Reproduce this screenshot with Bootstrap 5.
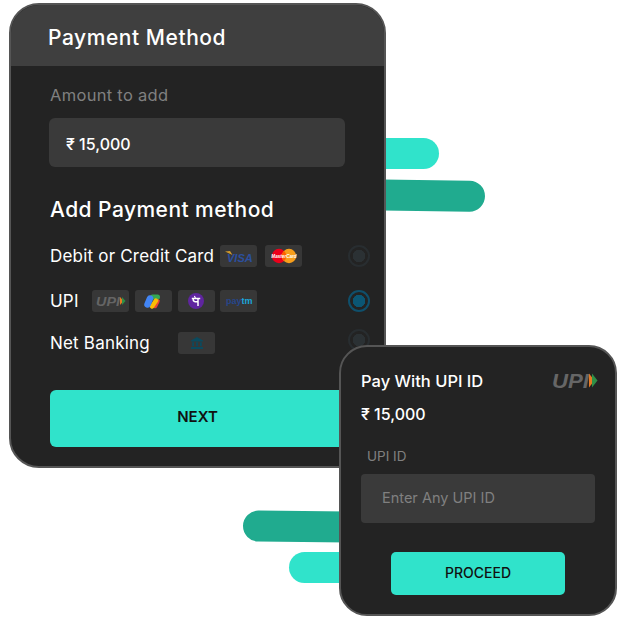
<!DOCTYPE html>
<html lang="en">
<head>
  <meta charset="UTF-8" />
  <meta name="viewport" content="width=device-width, initial-scale=1.0" />
  <title>Payment Method</title>
  <link href="https://cdn.jsdelivr.net/npm/bootstrap@5.3.3/dist/css/bootstrap.min.css" rel="stylesheet" />
  <style>
    :root {
      --panel: #232323;
      --panel-head: #3f3f3f;
      --panel-line: #555;
      --field: #3a3a3a;
      --muted: #808080;
      --teal: #30e3cb;
      --green: #20ab8f;
    }
    body {
      background: #fff;
      font-family: Inter, "Open Sans", sans-serif;
      color: #fff;
      overflow: hidden;
    }
    /* free canvas: cards and streaks overlap each other */
    .stage { position: relative; width: 625px; height: 625px; }
    .streak { position: absolute; height: 31px; border-radius: 16px; }
    .streak-a { left: 350px; top: 138px; width: 89px; background: var(--teal); }
    .streak-b { left: 350px; top: 180px; width: 135px; background: var(--green); transform: rotate(.7deg); }
    .streak-c { left: 243px; top: 511px; width: 120px; background: var(--green); transform: rotate(.6deg); }
    .streak-d { left: 289px; top: 552px; width: 80px; background: var(--teal); }

    .pay-panel {
      position: absolute;
      left: 9px; top: 3px; width: 377px;
      background: var(--panel);
      border: 2px solid var(--panel-line);
      border-radius: 30px;
      overflow: hidden;
    }
    .pay-panel .card-header {
      height: 61px;
      padding: 0 0 0 37px;
      background: var(--panel-head);
      border: 0;
      border-radius: 0;
      font-size: 21px;
      font-weight: 500;
      letter-spacing: .55px;
      line-height: 65px;
      color: #fff;
    }
    .pay-panel .card-body { padding: 17px 14px 19px 39px; }
    .field-label { font-size: 16.5px; letter-spacing: .3px; line-height: 24px; color: var(--muted); }
    .amount-box {
      width: 296px;
      height: 49px;
      margin: 11px 0 0 -1px;
      padding: 2px 17px 0;
      background: var(--field);
      border: 0;
      border-radius: 6px;
      color: #fff;
      font-size: 16px;
      font-weight: 500;
    }
    .amount-box:focus { background: var(--field); color: #fff; box-shadow: none; }
    .add-title { margin: 28px 0 -1px; font-size: 21px; letter-spacing: .45px; line-height: 30px; font-weight: 500; }
    .method-row { height: 30px; font-size: 17px; letter-spacing: .2px; }
    .method-row > span:first-child { padding-top: 2px; }
    .method-row.first { margin-top: 17px; }
    .method-row.second { margin-top: 15px; }
    .method-row.third { margin-top: 12px; }
    .lbl-card { width: 170px; white-space: nowrap; }
    .lbl-upi { width: 42px; }
    .lbl-net { width: 128px; white-space: nowrap; }
    .chip-gap { gap: 5.8px; }
    .chip {
      width: 37px; height: 22px;
      background: #373737;
      border-radius: 3px;
      display: flex; align-items: center; justify-content: center;
    }
    .pay-radio.form-check-input {
      width: 22px; height: 22px;
      margin: 0 0 0 auto;
      flex: none;
      background: radial-gradient(circle, #2b3134 0 6px, transparent 6.5px);
      border: 2px solid #282d30;
      box-shadow: none;
    }
    .pay-radio.form-check-input:checked {
      background: radial-gradient(circle, #0b5674 0 6px, transparent 6.5px);
      border-color: #0f4f6b;
    }
    .method-row.third .pay-radio { margin-top: -6px; }
    .next-btn {
      display: block;
      width: 295px; height: 57px;
      margin-top: 32px;
      padding: 0 0 2px;
      background: var(--teal);
      border: 0;
      border-radius: 6px;
      color: #111;
      font-size: 15px;
      font-weight: 600;
    }
    .upi-panel {
      position: absolute;
      left: 339px; top: 345px; width: 278px;
      padding: 22px 20px 19px;
      background: var(--panel);
      border: 2px solid var(--panel-line);
      border-radius: 28px;
      color: #fff;
    }
    .upi-title { font-size: 16.5px; line-height: 24px; font-weight: 500; white-space: nowrap; }
    .upi-logo { margin: 3px -3px 0 0; overflow: visible; flex: none; }
    .upi-amount { margin-top: 9px; font-size: 16px; line-height: 24px; font-weight: 500; }
    .upi-label { margin: 20px 0 8px 6px; font-size: 13.5px; line-height: 20px; color: var(--muted); }
    .upi-field {
      height: 49px;
      padding: 0 21px 2px;
      background: var(--field);
      border: 0;
      border-radius: 4px;
      color: #fff;
      font-size: 14.5px;
    }
    .upi-field::placeholder { color: var(--muted); opacity: 1; }
    .upi-field:focus { background: var(--field); box-shadow: none; }
    .proceed-btn {
      display: block;
      width: 174px; height: 43px;
      margin: 29px auto 0;
      padding: 0 0 3px;
      background: var(--teal);
      border: 0;
      border-radius: 5px;
      color: #111;
      font-size: 14px;
      font-weight: 500;
    }
    .logo-txt { font-family: "Liberation Sans", sans-serif; letter-spacing: 0; }
  </style>
</head>
<body>
  <div class="stage">
    <div class="streak streak-a"></div>
    <div class="streak streak-b"></div>
    <div class="streak streak-c"></div>
    <div class="streak streak-d"></div>

    <div class="card pay-panel">
      <div class="card-header">Payment Method</div>
      <div class="card-body">
        <div class="field-label">Amount to add</div>
        <input class="form-control amount-box" type="text" value="₹ 15,000" aria-label="Amount to add" />
        <h2 class="add-title">Add Payment method</h2>

        <div class="method-row first d-flex align-items-center">
          <span class="lbl-card">Debit or Credit Card</span>
          <div class="d-flex gap-2">
            <span class="chip">
              <svg width="30" height="14" viewBox="0 0 30 14"><path d="M1 2.5l5-.5 2.5 4z" fill="#d19a2c"/><text class="logo-txt" x="3" y="12.5" font-size="11" font-weight="700" font-style="italic" fill="#2c4f9e">VISA</text></svg>
            </span>
            <span class="chip">
              <svg width="26" height="16" viewBox="0 0 26 16"><circle cx="8" cy="8" r="7.2" fill="#eb001b"/><circle cx="18" cy="8" r="7.2" fill="#f79e1b"/><path d="M13 2.7a7.2 7.2 0 0 1 0 10.6 7.2 7.2 0 0 1 0-10.6z" fill="#ff5f00"/><text class="logo-txt" x="13" y="9.8" text-anchor="middle" font-size="4.6" font-weight="700" font-style="italic" fill="#fff">MasterCard</text></svg>
            </span>
          </div>
          <input class="form-check-input pay-radio" type="radio" name="method" aria-label="Card" />
        </div>

        <div class="method-row second d-flex align-items-center">
          <span class="lbl-upi">UPI</span>
          <div class="d-flex chip-gap">
            <span class="chip">
              <svg width="30" height="12" viewBox="0 0 30 12"><text class="logo-txt" x="0" y="10.5" font-size="12" font-weight="700" font-style="italic" fill="#656565" textLength="24" lengthAdjust="spacingAndGlyphs">UPI</text><path d="M24 2l3.5 4-3.5 4z" fill="#e87a24"/><path d="M26 2l3.5 4-3.5 4z" fill="#2f8f46"/></svg>
            </span>
            <span class="chip">
              <svg width="20" height="17" viewBox="0 0 20 17"><g fill="none" stroke-linecap="round"><path d="M14.5 8l-2.5 5" stroke="#ea4335" stroke-width="4.5"/><path d="M9.5 4h5" stroke="#34a853" stroke-width="5"/><path d="M13 7.5l-4 6" stroke="#fbbc04" stroke-width="4.5"/><path d="M7 5.5l-2.5 6" stroke="#4285f4" stroke-width="6.5"/></g></svg>
            </span>
            <span class="chip">
              <svg width="16" height="16" viewBox="0 0 16 16"><circle cx="8" cy="8" r="8" fill="#5f259f"/><g fill="none" stroke="#fff" stroke-width="1.5"><path d="M3.8 5.6h8.4"/><path d="M10 5.6v7.4"/><path d="M5.2 5.6c-.4 2.6 1.6 3.6 4.8 3.1"/><path d="M7.6 5.4L6.4 3" stroke-width="1.1"/></g></svg>
            </span>
            <span class="chip">
              <svg width="28" height="12" viewBox="0 0 28 12"><text class="logo-txt" x="1" y="9" font-size="9" font-weight="700" fill="#26468c">pay<tspan fill="#1ba7dc">tm</tspan></text></svg>
            </span>
          </div>
          <input class="form-check-input pay-radio" type="radio" name="method" checked aria-label="UPI" />
        </div>

        <div class="method-row third d-flex align-items-center">
          <span class="lbl-net">Net Banking</span>
          <span class="chip">
            <svg width="12" height="12" viewBox="0 0 12 12" fill="#0b4a5e"><path d="M6 0l6 3.4v1H0v-1z"/><path d="M1.2 5.2h1.8v4H1.2zM5.1 5.2h1.8v4H5.1zM9 5.2h1.8v4H9z"/><path d="M0 10h12v2H0z"/></svg>
          </span>
          <input class="form-check-input pay-radio" type="radio" name="method" aria-label="Net banking" />
        </div>

        <button class="btn next-btn" type="button">NEXT</button>
      </div>
    </div>

    <div class="upi-panel">
      <div class="d-flex justify-content-between align-items-start">
        <span class="upi-title">Pay With UPI ID</span>
        <svg class="upi-logo" width="46" height="17" viewBox="0 0 46 17"><text class="logo-txt" x="0" y="15.5" font-size="20" font-weight="700" font-style="italic" fill="#666" textLength="37" lengthAdjust="spacingAndGlyphs">UPI</text><path d="M37 1.5l5.5 7-5.5 7z" fill="#e87a24"/><path d="M40 1.5l5.5 7-5.5 7z" fill="#2f8f46"/></svg>
      </div>
      <div class="upi-amount">₹ 15,000</div>
      <div class="upi-label">UPI ID</div>
      <input class="form-control upi-field" type="text" placeholder="Enter Any UPI ID" aria-label="UPI ID" />
      <button class="btn proceed-btn" type="button">PROCEED</button>
    </div>
  </div>

  <script src="https://cdn.jsdelivr.net/npm/bootstrap@5.3.3/dist/js/bootstrap.bundle.min.js"></script>
</body>
</html>
